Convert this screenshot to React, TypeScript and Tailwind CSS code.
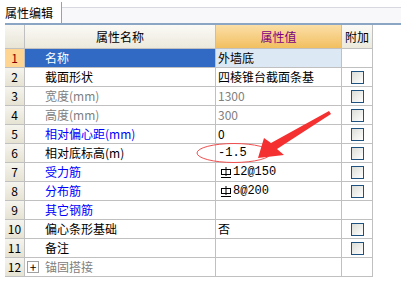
const FONT = { fontFamily: '"Noto Sans CJK SC", "DejaVu Sans", sans-serif' }

type Row = {
  no: number
  name: string
  color: 'black' | 'gray' | 'blue'
  value?: string
  bar?: boolean
  mono?: boolean
  valueGray?: boolean
  check: boolean
  plus?: boolean
}

const rows: Row[] = [
  { no: 1, name: '名称', color: 'black', value: '外墙底', check: false },
  { no: 2, name: '截面形状', color: 'black', value: '四棱锥台截面条基', check: true },
  { no: 3, name: '宽度(mm)', color: 'gray', value: '1300', valueGray: true, check: true },
  { no: 4, name: '高度(mm)', color: 'gray', value: '300', valueGray: true, check: true },
  { no: 5, name: '相对偏心距(mm)', color: 'blue', value: '0', check: true },
  { no: 6, name: '相对底标高(m)', color: 'black', value: '-1.5', mono: true, check: true },
  { no: 7, name: '受力筋', color: 'blue', value: '12@150', bar: true, mono: true, check: true },
  { no: 8, name: '分布筋', color: 'blue', value: '8@200', bar: true, mono: true, check: true },
  { no: 9, name: '其它钢筋', color: 'blue', check: false },
  { no: 10, name: '偏心条形基础', color: 'black', value: '否', check: true },
  { no: 11, name: '备注', color: 'black', check: true },
  { no: 12, name: '锚固搭接', color: 'gray', check: false, plus: true }
]

const nameColor = {
  black: 'text-black',
  gray: 'text-[#808080]',
  blue: 'text-[#0000ff]'
}

// rebar grade symbol: phi with a base bar
function Rebar() {
  return (
    <svg width="12" height="12" viewBox="0 0 12 12" className="ml-[2px] mr-[1px]">
      <rect x="1.5" y="3.5" width="9" height="5" fill="none" stroke="black" />
      <path d="M6 1V10M1 11.5H11" stroke="black" />
    </svg>
  )
}

function Checkbox() {
  return (
    <div className="h-[13px] w-[13px] border border-[#1c5180] bg-gradient-to-br from-[#dcdcd7] to-white" />
  )
}

export default function App() {
  return (
    <div className="relative h-[289px] w-[401px] overflow-hidden bg-white text-[12px] leading-none" style={FONT}>
      {/* tab bar */}
      <div className="flex h-[23px] items-end">
        <div className="flex h-[21px] w-[62px] items-center border-r border-[#a0a0a0] pl-[5px]">属性编辑</div>
        <div className="h-[16px] flex-1 border-t border-[#d8d8e0] bg-[#f8f8fb]" />
      </div>
      <div className="ml-[5px] h-[2px] bg-[#8aa6c4]" />

      {/* table */}
      <div className="ml-[5px] w-[368px]">
        <div className="flex h-[24px] border-b border-[#c0c0c0]">
          <div className="w-[20px] border-r border-[#c0c0c0] bg-gradient-to-b from-[#f8f7f2] to-[#e8e5d6]" />
          <div className="flex w-[191px] items-center justify-center border-r border-[#c0c0c0] bg-gradient-to-b from-[#fbfaf6] to-[#ece9dc]">
            属性名称
          </div>
          <div className="flex w-[126px] items-center justify-center border-r border-[#c0c0c0] bg-gradient-to-b from-[#fbdfa6] to-[#f2bf5e] text-[#800080]">
            属性值
          </div>
          <div className="flex w-[31px] items-center justify-center border-r border-[#c0c0c0] bg-gradient-to-b from-[#fbfaf6] to-[#ece9dc]">
            附加
          </div>
        </div>

        {rows.map((r) => (
          <div key={r.no} className="flex h-[19px] border-b border-[#c0c0c0]">
            <div
              className={
                r.no === 1
                  ? 'flex w-[20px] items-center justify-center border-r border-[#c0c0c0] bg-[#ffd591] text-[#800000]'
                  : 'flex w-[20px] items-center justify-center border-r border-[#c0c0c0] bg-gradient-to-b from-[#f5f4ee] to-[#e6e3d3]'
              }
            >
              {r.no}
            </div>
            <div
              className={
                r.no === 1
                  ? 'flex w-[191px] items-center border-r border-[#c0c0c0] bg-[#316ac5] pl-[20px] text-white'
                  : `flex w-[191px] items-center border-r border-[#c0c0c0] pl-[2px] ${nameColor[r.color]}`
              }
            >
              {r.no !== 1 && (
                <div className="mr-[6px] flex w-[12px] justify-center">
                  {r.plus && (
                    <div className="flex h-[12px] w-[12px] items-center justify-center border border-[#a0a0a0] text-[12px] text-black">
                      +
                    </div>
                  )}
                </div>
              )}
              {r.name}
            </div>
            <div
              className={`flex w-[126px] items-center border-r border-[#c0c0c0] pl-[2px] ${
                r.no === 1 ? 'bg-[#dde8f5]' : ''
              } ${r.valueGray ? 'text-[#808080]' : 'text-black'}`}
            >
              {r.bar && <Rebar />}
              {r.mono ? (
                <span className="text-[12px]" style={{ fontFamily: '"Liberation Mono", monospace' }}>
                  {r.value}
                </span>
              ) : (
                r.value
              )}
            </div>
            <div className="flex w-[31px] items-center justify-center border-r border-[#c0c0c0]">
              {r.check && <Checkbox />}
            </div>
          </div>
        ))}
      </div>

      {/* annotation */}
      <svg className="pointer-events-none absolute left-0 top-0" width="401" height="289">
        <ellipse cx="234" cy="153" rx="37" ry="9.5" fill="none" stroke="#f05050" strokeWidth="1" />
        <polygon
          points="258,158 264,138 271,143 329,111 331,114 277,149 284,155"
          fill="#f53030"
        />
      </svg>
    </div>
  )
}
